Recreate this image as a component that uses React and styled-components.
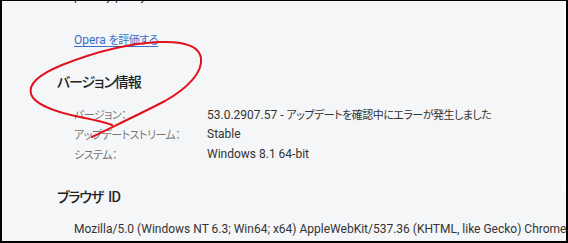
import React from "react";
import styled, { createGlobalStyle } from "styled-components";

const Global = createGlobalStyle`
  html, body { margin: 0; padding: 0; background: #000; }
  body {
    font-family: "Roboto", "Noto Sans CJK JP", sans-serif;
    font-size: 12px;
    overflow: hidden;
  }
`;

const Page = styled.div`
  position: relative;
  width: 568px;
  height: 243px;
  background: #000;
  padding: 1px 2px 2px 2px;
  box-sizing: border-box;
`;

const Frame = styled.div`
  position: relative;
  display: flex;
  height: 100%;
  background: #f5f6f8;
  overflow: hidden;
`;

const Content = styled.div`
  flex: 1;
  min-width: 0;
  display: flex;
  flex-direction: column;
  padding-left: 55px;
  white-space: nowrap;
`;

const ScrollTrack = styled.div`
  position: absolute;
  right: 0;
  top: 0;
  width: 3px;
  height: 190px;
  background: #fcfcfd;
`;

const Jp = styled.span`
  font-family: "Noto Sans CJK JP", sans-serif;
  font-size: 11px;
  font-feature-settings: "palt";
  letter-spacing: -0.5px;
`;

const Indented = styled.div`
  padding-left: 17px;
  line-height: 16px;
  margin-top: ${(p) => p.$gap}px;
`;

const TopCut = styled(Indented)`
  color: #333;
`;

const Link = styled.a`
  color: #3b6ec8;
  text-decoration: underline;
  text-underline-offset: 2px;
`;

const Heading = styled.h2`
  margin: ${(p) => p.$gap}px 0 0 0;
  font-family: "Noto Sans CJK JP", sans-serif;
  font-feature-settings: "palt";
  font-size: 14px;
  font-weight: 500;
  letter-spacing: -1.1px;
  word-spacing: 3px;
  line-height: 20px;
  color: #222;
`;

const InfoGrid = styled.div`
  display: grid;
  grid-template-columns: 133px 1fr;
  grid-auto-rows: 20px;
  align-items: center;
  padding-left: 17px;
  margin-top: 13px;
`;

const Label = styled.div`
  color: #777;
`;

const Value = styled.div`
  color: #333;
`;

const UserAgent = styled(Indented)`
  color: #333;
`;

const Scribble = styled.svg`
  position: absolute;
  left: 0;
  top: 0;
  pointer-events: none;
`;

const rows = [
  { label: "バージョン：", value: <>53.0.2907.57 - <Jp>アップデートを確認中にエラーが発生しました</Jp></> },
  { label: "アップデートストリーム：", value: "Stable" },
  { label: "システム：", value: "Windows 8.1 64-bit" },
];

export default function App() {
  return (
    <>
      <Global />
      <Page>
        <Frame>
          <Content>
            <TopCut $gap={-13}>privacy policy</TopCut>
            <Indented $gap={27}>
              <Link href="#">
                Opera <Jp>を評価する</Jp>
              </Link>
            </Indented>
            <Heading $gap={23}>バージョン情報</Heading>
            <InfoGrid>
              {rows.map((r) => (
                <React.Fragment key={r.label}>
                  <Label>
                    <Jp>{r.label}</Jp>
                  </Label>
                  <Value>{r.value}</Value>
                </React.Fragment>
              ))}
            </InfoGrid>
            <Heading $gap={22}>ブラウザ ID</Heading>
            <UserAgent $gap={15}>
              Mozilla/5.0 (Windows NT 6.3; Win64; x64) AppleWebKit/537.36 (KHTML, like Gecko) Chrome/66.0.3359.181 Safari/537.36 OPR/53.0.2907.57
            </UserAgent>
          </Content>
          <ScrollTrack />
        </Frame>
        <Scribble width="568" height="243" viewBox="0 0 568 243">
          <path
            d="M92,137 C110,128 140,114 165,101 C188,88 203,72 201,58 C199,46 185,41 160,42 C130,43 95,52 62,65 C40,74 28,84 31,94 C34,104 55,112 80,117 C95,120 105,122 112,125"
            fill="none"
            stroke="#e1121b"
            strokeWidth="2"
            strokeLinecap="round"
          />
        </Scribble>
      </Page>
    </>
  );
}
